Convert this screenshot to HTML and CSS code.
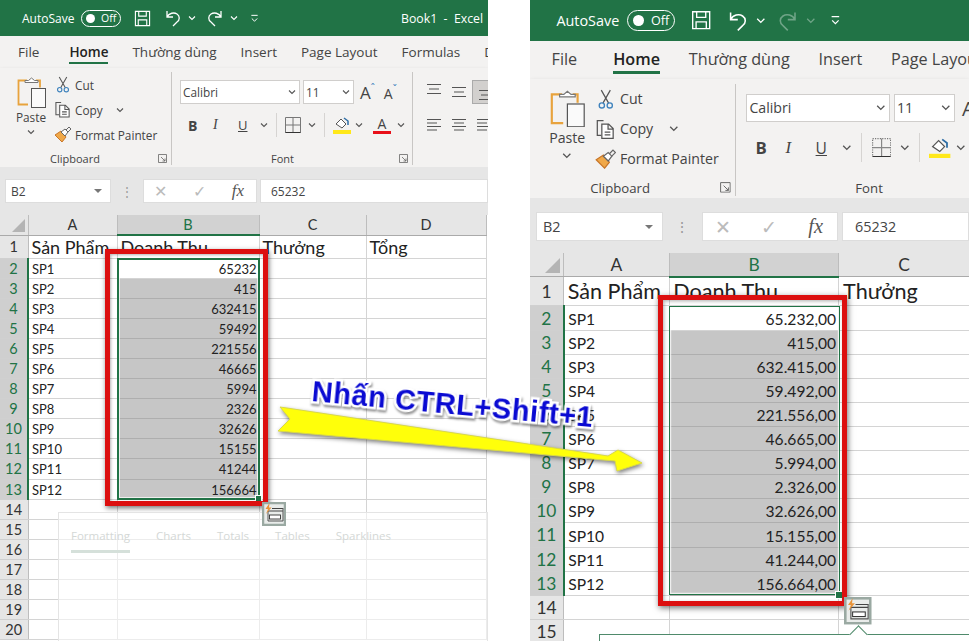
FILE: index.html
```html
<!DOCTYPE html>
<html lang="en">
<head>
    <meta charset="UTF-8">
    <title>Nhấn CTRL+Shift+1</title>
    <link rel="stylesheet" href="styles.css">
</head>
<body>
    <!-- Shared icons -->
    <svg class="icon-defs" width="0" height="0">
        <symbol id="i-save" viewBox="0 0 18 18"><path d="M1.5 1.5h15v15h-15zM5 1.5v5h8v-5M4.5 16.5v-6h9v6" fill="none" stroke="currentColor" stroke-width="1.2"/></symbol>
        <symbol id="i-undo" viewBox="0 0 18 18"><path d="M3 2v6h6M3 8c2-4 7-5 10-3 3 2 3 6 0 8l-4 4" fill="none" stroke="currentColor" stroke-width="1.3"/></symbol>
        <symbol id="i-redo" viewBox="0 0 18 18"><path d="M15 2v6H9M15 8c-2-4-7-5-10-3-3 2-3 6 0 8l4 4" fill="none" stroke="currentColor" stroke-width="1.3"/></symbol>
        <symbol id="i-chev" viewBox="0 0 8 6"><path d="M1 1.5l3 3 3-3" fill="none" stroke="currentColor" stroke-width="1.1"/></symbol>
        <symbol id="i-qat" viewBox="0 0 10 10"><path d="M1.5 1.5h7M2 5l3 3 3-3" fill="none" stroke="currentColor" stroke-width="1.1"/></symbol>
        <symbol id="i-paste" viewBox="0 0 30 32"><path d="M6 4.500h4M19 4.500h4v7M6 4.500H1.500v24H11" fill="none" stroke="#e8a33d" stroke-width="1.800"/><path d="M8 6.500V4.500h3.500l3-2.500 3 2.500H21v2z" fill="#fff" stroke="#777"/><rect x="14.500" y="12.500" width="14" height="19" fill="#fafafa" stroke="#555"/></symbol>
        <symbol id="i-cut" viewBox="0 0 14 18"><path d="M3 1l6.500 11.500M11 1L4.500 12.500" fill="none" stroke="#555" stroke-width="1.100"/><circle cx="3.500" cy="14.500" r="2.300" fill="none" stroke="#3f83bd" stroke-width="1.200"/><circle cx="10.500" cy="14.500" r="2.300" fill="none" stroke="#3f83bd" stroke-width="1.200"/></symbol>
        <symbol id="i-copy" viewBox="0 0 18 18"><path d="M5 14.500H1.500V1.500H7" fill="none" stroke="#555" stroke-width="1.100"/><path d="M5.500 4.500h6l4 4v8.500h-10zM11 4.500v4.500h4.500M8 11.500h5M8 14h5" fill="#fff" stroke="#555" stroke-width="1.100"/></symbol>
        <symbol id="i-painter" viewBox="0 0 18 17"><path d="M1 9l6-4 5 6-4 5z" fill="#f0a848" stroke="#c8762a"/><path d="M7 6l4-3 3 3-3 4z" fill="#fff" stroke="#666"/><path d="M12 4l3-3 2 2-3 3" fill="none" stroke="#666"/></symbol>
        <symbol id="i-launch" viewBox="0 0 9 9"><path d="M.5.500h8v8h-8zM3 3l4 4M7 4.500V7H4.500" fill="none" stroke="#666" stroke-width=".8"/></symbol>
        <symbol id="i-lines-c" viewBox="0 0 16 12"><path d="M1 1.500h14M3 6h10M1 10.500h14" stroke="#555" stroke-width="1.100"/></symbol>
        <symbol id="i-lines-l" viewBox="0 0 16 14"><path d="M1 1.500h14M1 5h10M1 8.500h14M1 12h10" stroke="#555" stroke-width="1.100"/></symbol>
        <symbol id="i-lines-m" viewBox="0 0 16 14"><path d="M1 1.500h14M3 5h10M1 8.500h14M3 12h10" stroke="#555" stroke-width="1.100"/></symbol>
        <symbol id="i-borders" viewBox="0 0 16 16"><path d="M.5.500h15v15H.5zM8 .5v15M.5 8h15" fill="none" stroke="#777"/><path d="M.5 15.500h15" stroke="#333"/></symbol>
        <symbol id="i-borders-dash" viewBox="0 0 16 16"><path d="M.5.500h15v15H.5z" fill="none" stroke="#777" stroke-dasharray="1 1"/><path d="M8 .5v15M.5 8h15" fill="none" stroke="#888"/><path d="M.5 15.500h15" stroke="#333"/></symbol>
        <symbol id="i-fill" viewBox="0 0 18 18"><path d="M3 8l5-5 5 5-4 4z" fill="#fff" stroke="#555"/><path d="M11 2l4 3v4" fill="none" stroke="#2f6ea5" stroke-width="1.500"/><rect y="14" width="18" height="4" fill="#ffe81a"/></symbol>
        <symbol id="i-quick" viewBox="0 0 24 24"><rect x="1" y="1" width="22" height="22" fill="#e9ecea" stroke="#9aa9a2" stroke-width="2.500"/><path d="M10 6.500h11M6 9h15" stroke="#444"/><path d="M6 9v10h15V6" fill="none" stroke="#555"/><rect x="7.500" y="13" width="11" height="4" fill="#fff" stroke="#333" stroke-width=".9"/><path d="M7.500 1L3.500 7h2.500L4 12l5.500-6.500H7z" fill="#e8943a"/></symbol>
    </svg>

    <div class="page">
        <!-- Left window: before -->
        <section class="excel excel-before">
            <header class="titlebar">
                <span class="autosave">AutoSave</span>
                <span class="toggle"><i></i>Off</span>
                <svg class="qa-save"><use href="#i-save"/></svg>
                <svg class="qa-undo"><use href="#i-undo"/></svg>
                <svg class="chev chev-light"><use href="#i-chev"/></svg>
                <svg class="qa-undo"><use href="#i-redo"/></svg>
                <svg class="chev chev-light"><use href="#i-chev"/></svg>
                <svg class="qa-more"><use href="#i-qat"/></svg>
                <span class="doc-title">Book1 &nbsp;-&nbsp; Excel</span>
            </header>
            <nav class="tabs">
                <a class="tab-file">File</a><a class="active">Home</a><a>Thường dùng</a><a>Insert</a><a>Page Layout</a><a>Formulas</a><a>Data</a>
            </nav>
            <div class="ribbon">
                <div class="group group-clip">
                    <div class="group-body clip-body">
                        <div class="paste">
                            <svg class="paste-icon"><use href="#i-paste"/></svg>
                            <span>Paste</span>
                            <svg class="chev"><use href="#i-chev"/></svg>
                        </div>
                        <div class="clip-list">
                            <div class="clip-item"><svg class="clip-icon"><use href="#i-cut"/></svg>Cut</div>
                            <div class="clip-item"><svg class="clip-icon"><use href="#i-copy"/></svg>Copy<svg class="chev chev-copy"><use href="#i-chev"/></svg></div>
                            <div class="clip-item"><svg class="clip-icon"><use href="#i-painter"/></svg>Format Painter</div>
                        </div>
                    </div>
                    <div class="group-label"><span>Clipboard</span><svg class="launch"><use href="#i-launch"/></svg></div>
                </div>
                <div class="group group-font">
                    <div class="group-body">
                        <div class="font-row">
                            <div class="combo combo-font">Calibri<svg class="chev"><use href="#i-chev"/></svg></div>
                            <div class="combo combo-size">11<svg class="chev"><use href="#i-chev"/></svg></div>
                            <span class="grow">A<sup>ˆ</sup></span>
                            <span class="shrink">A<sup>ˇ</sup></span>
                        </div>
                        <div class="font-row style-row">
                            <b class="st">B</b><i class="st st-i">I</i><u class="st st-u">U</u><svg class="chev"><use href="#i-chev"/></svg>
                            <span class="vsep"></span>
                            <svg class="tool"><use href="#i-borders"/></svg><svg class="chev"><use href="#i-chev"/></svg>
                            <span class="vsep"></span>
                            <svg class="tool tool-fill"><use href="#i-fill"/></svg><svg class="chev"><use href="#i-chev"/></svg>
                            <span class="font-color">A</span><svg class="chev"><use href="#i-chev"/></svg>
                        </div>
                    </div>
                    <div class="group-label"><span>Font</span><svg class="launch"><use href="#i-launch"/></svg></div>
                </div>
                <div class="group group-align">
                    <div class="align-row">
                        <svg class="align align-top"><use href="#i-lines-c"/></svg>
                        <svg class="align"><use href="#i-lines-c"/></svg>
                        <span class="align-on"><svg class="align"><use href="#i-lines-c"/></svg></span>
                    </div>
                    <div class="align-row align-row2">
                        <svg class="align"><use href="#i-lines-l"/></svg>
                        <svg class="align"><use href="#i-lines-m"/></svg>
                        <svg class="align"><use href="#i-lines-l"/></svg>
                    </div>
                </div>
            </div>
            <div class="formula">
                <div class="namebox">B2<span class="caret"></span></div>
                <div class="dots">⋮</div>
                <div class="fx-box"><span>✕</span><span>✓</span><em>fx</em></div>
                <div class="fx-input">65232</div>
            </div>
            <div class="sheet">
                <table>
                    <colgroup><col class="w-head"><col class="w-a"><col class="w-b"><col class="w-c"><col class="w-d"></colgroup>
                    <tr class="col-heads"><th class="corner"><span></span></th><th>A</th><th class="on">B</th><th>C</th><th>D</th></tr>
                    <tr class="title-row"><th>1</th><td>Sản Phẩm</td><td>Doanh Thu</td><td>Thưởng</td><td>Tổng</td></tr>
                    <tr><th class="on">2</th><td>SP1</td><td class="num first">65232</td><td></td><td></td></tr>
                    <tr><th class="on">3</th><td>SP2</td><td class="num sel">415</td><td></td><td></td></tr>
                    <tr><th class="on">4</th><td>SP3</td><td class="num sel">632415</td><td></td><td></td></tr>
                    <tr><th class="on">5</th><td>SP4</td><td class="num sel">59492</td><td></td><td></td></tr>
                    <tr><th class="on">6</th><td>SP5</td><td class="num sel">221556</td><td></td><td></td></tr>
                    <tr><th class="on">7</th><td>SP6</td><td class="num sel">46665</td><td></td><td></td></tr>
                    <tr><th class="on">8</th><td>SP7</td><td class="num sel">5994</td><td></td><td></td></tr>
                    <tr><th class="on">9</th><td>SP8</td><td class="num sel">2326</td><td></td><td></td></tr>
                    <tr><th class="on">10</th><td>SP9</td><td class="num sel">32626</td><td></td><td></td></tr>
                    <tr><th class="on">11</th><td>SP10</td><td class="num sel">15155</td><td></td><td></td></tr>
                    <tr><th class="on">12</th><td>SP11</td><td class="num sel">41244</td><td></td><td></td></tr>
                    <tr><th class="on">13</th><td>SP12</td><td class="num sel">156664</td><td></td><td></td></tr>
                    <tr><th>14</th><td></td><td></td><td></td><td></td></tr>
                    <tr><th>15</th><td></td><td></td><td></td><td></td></tr>
                    <tr><th>16</th><td></td><td></td><td></td><td></td></tr>
                    <tr><th>17</th><td></td><td></td><td></td><td></td></tr>
                    <tr><th>18</th><td></td><td></td><td></td><td></td></tr>
                    <tr><th>19</th><td></td><td></td><td></td><td></td></tr>
                    <tr><th>20</th><td></td><td></td><td></td><td></td></tr>
                </table>
                <div class="selection"><span class="handle"></span></div>
                <div class="redbox"></div>
                <div class="ghost-popup">
                    <span class="ghost-on">Formatting</span><span>Charts</span><span>Totals</span><span>Tables</span><span>Sparklines</span>
                </div>
                <svg class="quick"><use href="#i-quick"/></svg>
            </div>
        </section>

        <!-- Right window: after -->
        <section class="excel excel-after">
            <header class="titlebar">
                <span class="autosave">AutoSave</span>
                <span class="toggle"><i></i>Off</span>
                <svg class="qa-save"><use href="#i-save"/></svg>
                <svg class="qa-undo"><use href="#i-undo"/></svg>
                <svg class="chev chev-light"><use href="#i-chev"/></svg>
                <svg class="qa-undo dim"><use href="#i-redo"/></svg>
                <svg class="chev chev-light dim"><use href="#i-chev"/></svg>
                <svg class="qa-more"><use href="#i-qat"/></svg>
            </header>
            <nav class="tabs">
                <a class="tab-file">File</a><a class="active">Home</a><a>Thường dùng</a><a>Insert</a><a>Page Layout</a>
            </nav>
            <div class="ribbon">
                <div class="group group-clip">
                    <div class="group-body clip-body">
                        <div class="paste">
                            <svg class="paste-icon"><use href="#i-paste"/></svg>
                            <span>Paste</span>
                            <svg class="chev"><use href="#i-chev"/></svg>
                        </div>
                        <div class="clip-list">
                            <div class="clip-item"><svg class="clip-icon"><use href="#i-cut"/></svg>Cut</div>
                            <div class="clip-item"><svg class="clip-icon"><use href="#i-copy"/></svg>Copy<svg class="chev chev-copy"><use href="#i-chev"/></svg></div>
                            <div class="clip-item"><svg class="clip-icon"><use href="#i-painter"/></svg>Format Painter</div>
                        </div>
                    </div>
                    <div class="group-label"><span>Clipboard</span><svg class="launch"><use href="#i-launch"/></svg></div>
                </div>
                <div class="group group-font">
                    <div class="group-body">
                        <div class="font-row">
                            <div class="combo combo-font">Calibri<svg class="chev"><use href="#i-chev"/></svg></div>
                            <div class="combo combo-size">11<svg class="chev"><use href="#i-chev"/></svg></div>
                            <span class="grow">A<sup>ˆ</sup></span>
                        </div>
                        <div class="font-row style-row">
                            <b class="st">B</b><i class="st st-i">I</i><u class="st st-u">U</u><svg class="chev"><use href="#i-chev"/></svg>
                            <span class="vsep"></span>
                            <svg class="tool"><use href="#i-borders-dash"/></svg><svg class="chev"><use href="#i-chev"/></svg>
                            <span class="vsep"></span>
                            <svg class="tool tool-fill"><use href="#i-fill"/></svg><svg class="chev"><use href="#i-chev"/></svg>
                        </div>
                    </div>
                    <div class="group-label"><span>Font</span><svg class="launch"><use href="#i-launch"/></svg></div>
                </div>
            </div>
            <div class="formula">
                <div class="namebox">B2<span class="caret"></span></div>
                <div class="dots">⋮</div>
                <div class="fx-box"><span>✕</span><span>✓</span><em>fx</em></div>
                <div class="fx-input">65232</div>
            </div>
            <div class="sheet">
                <table>
                    <colgroup><col class="w-head"><col class="w-a"><col class="w-b"><col class="w-c"></colgroup>
                    <tr class="col-heads"><th class="corner"><span></span></th><th>A</th><th class="on">B</th><th>C</th></tr>
                    <tr class="title-row"><th>1</th><td>Sản Phẩm</td><td>Doanh Thu</td><td>Thưởng</td></tr>
                    <tr><th class="on">2</th><td>SP1</td><td class="num first">65.232,00</td><td></td></tr>
                    <tr><th class="on">3</th><td>SP2</td><td class="num sel">415,00</td><td></td></tr>
                    <tr><th class="on">4</th><td>SP3</td><td class="num sel">632.415,00</td><td></td></tr>
                    <tr><th class="on">5</th><td>SP4</td><td class="num sel">59.492,00</td><td></td></tr>
                    <tr><th class="on">6</th><td>SP5</td><td class="num sel">221.556,00</td><td></td></tr>
                    <tr><th class="on">7</th><td>SP6</td><td class="num sel">46.665,00</td><td></td></tr>
                    <tr><th class="on">8</th><td>SP7</td><td class="num sel">5.994,00</td><td></td></tr>
                    <tr><th class="on">9</th><td>SP8</td><td class="num sel">2.326,00</td><td></td></tr>
                    <tr><th class="on">10</th><td>SP9</td><td class="num sel">32.626,00</td><td></td></tr>
                    <tr><th class="on">11</th><td>SP10</td><td class="num sel">15.155,00</td><td></td></tr>
                    <tr><th class="on">12</th><td>SP11</td><td class="num sel">41.244,00</td><td></td></tr>
                    <tr><th class="on">13</th><td>SP12</td><td class="num sel">156.664,00</td><td></td></tr>
                    <tr><th>14</th><td></td><td></td><td></td></tr>
                    <tr><th>15</th><td></td><td></td><td></td></tr>
                </table>
                <div class="selection"><span class="handle"></span></div>
                <div class="redbox"></div>
                <div class="popup-edge"></div>
                <svg class="quick"><use href="#i-quick"/></svg>
            </div>
        </section>

        <!-- Arrow and caption lie over both windows -->
        <svg class="arrow" width="972" height="641">
            <polygon class="arrow-shape" points="280,407 608,456 618,450 642,463 617,471 615,461 278,431 290,419"/>
        </svg>
        <div class="caption">Nhấn CTRL+Shift+1</div>
    </div>
</body>
</html>
```
FILE: styles.css
```css
/* Basic styling */
* {
    box-sizing: border-box;
}

body {
    margin: 0;
    background-color: #fff;
    font-family: "Open Sans", "Noto Sans", sans-serif;
    color: #444;
}

.icon-defs {
    position: absolute;
}

.page {
    position: relative;
    display: flex;
    gap: 42px;
    height: 641px;
    overflow: hidden;
}

/* Each window is drawn at the left window's size, the right one is zoomed */
.excel {
    flex: none;
    overflow: hidden;
    height: 641px;
}

.excel-before {
    width: 488px;
    --title-h: 36px;
    --row1-h: 23px;
    --sheet-gap: 12px;
}

.excel-after {
    width: 366px;
    zoom: 1.2;
    height: 534px;
    --title-h: 34px;
    --row1-h: 24.2px;
    --sheet-gap: 9.8px;
}

/* Title bar */
.titlebar {
    display: flex;
    align-items: center;
    height: var(--title-h);
    padding-left: 22px;
    background-color: #217346;
    color: #fff;
    font-size: 12px;
}

.autosave {
    width: 59px;
}

.toggle {
    display: flex;
    align-items: center;
    width: 40px;
    height: 17px;
    padding-left: 4px;
    border: 1px solid #fff;
    border-radius: 9px;
    font-size: 10.5px;
}

.toggle i {
    width: 9px;
    height: 9px;
    margin-right: 6px;
    border-radius: 50%;
    background-color: #fff;
}

.qa-save {
    width: 17px;
    height: 17px;
    margin: 0 13px;
}

.qa-undo {
    width: 18px;
    height: 18px;
    margin-right: 6px;
}

.qa-more {
    width: 9px;
    height: 9px;
    margin-left: 2px;
}

.dim {
    opacity: 0.35;
}

.chev {
    flex: none;
    width: 8px;
    height: 6px;
    color: #555;
}

.chev-light {
    margin-right: 10px;
    color: #fff;
}

.doc-title {
    margin-left: 142px;
    font-size: 12.3px;
    white-space: nowrap;
}

/* Tabs */
.tabs {
    display: flex;
    gap: 24px;
    height: 32px;
    padding: 7px 0 0 18px;
    background-color: #f3f2f1;
    font-size: 13.5px;
    white-space: nowrap;
}

.tabs a {
    height: 21px;
    line-height: 18px;
}

.tabs .tab-file {
    margin-right: 6px;
}

.tabs .active {
    border-bottom: 2.5px solid #217346;
    color: #222;
    font-weight: 600;
}

/* Ribbon */
.ribbon {
    display: flex;
    height: 99px;
    padding-top: 4px;
    background-color: #f3f2f1;
    box-shadow: 0 2px 4px rgba(0, 0, 0, 0.18);
    font-size: 11.8px;
}

.group {
    display: flex;
    flex: none;
    flex-direction: column;
    height: 93px;
    border-right: 1px solid #c8c6c4;
}

.group-body {
    height: 80px;
}

.group-label {
    display: flex;
    align-items: center;
    justify-content: center;
    height: 13px;
    font-size: 11px;
}

.group-label span {
    flex: 1;
    text-align: center;
}

.group-clip .group-label span {
    padding-right: 8px;
}

.group-font .group-label span {
    padding-right: 14px;
}

.launch {
    width: 9px;
    height: 9px;
    margin-right: 4px;
}

.group-clip {
    width: 172px;
}

.clip-body {
    display: flex;
    padding-left: 13px;
}

.paste {
    display: flex;
    flex-direction: column;
    align-items: center;
    width: 36px;
    padding-top: 4px;
}

.paste-icon {
    width: 30px;
    height: 32px;
    margin: 0 0 1px 2px;
}

.paste .chev {
    margin-top: 4px;
}

.clip-list {
    margin-left: 5px;
}

.clip-item {
    display: flex;
    align-items: center;
    height: 25px;
    white-space: nowrap;
}

.clip-icon {
    width: 18px;
    height: 17px;
    margin-right: 3px;
}

.chev-copy {
    margin-left: 13px;
}

.group-font {
    width: 241px;
    padding-left: 8px;
}

.font-row {
    display: flex;
    align-items: center;
    height: 24px;
    margin-top: 8px;
}

.combo {
    display: flex;
    align-items: center;
    justify-content: space-between;
    height: 24px;
    margin-right: 3px;
    padding: 0 3px 0 2px;
    border: 1px solid #d0cecc;
    background-color: #fff;
}

.combo-font {
    width: 120px;
}

.combo-size {
    width: 51px;
}

.grow,
.shrink {
    margin-left: 3px;
    font-size: 17px;
}

.shrink {
    margin-left: 9px;
    font-size: 14px;
}

.grow sup,
.shrink sup {
    color: #3f83bd;
    font-size: 10px;
}

.style-row {
    margin-top: 9px;
    padding-left: 8px;
}

.st {
    width: 25px;
    font-family: "Liberation Serif", serif;
    font-size: 14px;
}

b.st {
    font-family: "Open Sans", sans-serif;
}

.st-u {
    width: 14px;
    margin-right: 8px;
    font-family: "Open Sans", sans-serif;
    font-size: 13px;
}

.vsep {
    width: 1px;
    height: 24px;
    margin: 0 8px;
    background-color: #d6d4d2;
}

.tool {
    width: 16px;
    height: 16px;
    margin-right: 7px;
}

.tool-fill {
    width: 18px;
    height: 18px;
    margin-right: 4px;
}

.font-color {
    width: 18px;
    margin: 0 6px 0 10px;
    border-bottom: 3px solid #e8101a;
    font-size: 14px;
    line-height: 15px;
    text-align: center;
}

.group-align {
    flex: 1;
    border: 0;
    padding-left: 13px;
}

.align-row {
    display: flex;
    align-items: center;
    gap: 9px;
    height: 24px;
    margin-top: 8px;
}

.align-row2 {
    margin-top: 9px;
}

.align {
    flex: none;
    width: 16px;
    height: 14px;
}

.align-top {
    margin-bottom: 6px;
}

.align-on {
    display: flex;
    align-items: flex-end;
    height: 24px;
    margin-left: -4px;
    padding: 0 0 1px 5px;
    border: 1px solid #aaa;
    background-color: #d2d0ce;
}

/* Formula bar */
.formula {
    display: flex;
    align-items: center;
    padding: 12px 0 var(--sheet-gap) 5px;
    background-color: #e6e6e6;
    font-size: 12px;
}

.namebox,
.fx-box,
.fx-input {
    display: flex;
    align-items: center;
    height: 24px;
    background-color: #fff;
    border: 1px solid #ddd;
}

.namebox {
    justify-content: space-between;
    width: 106px;
    padding: 0 8px 0 5px;
}

.caret {
    border: 4px solid transparent;
    border-top-color: #777;
    border-bottom: 0;
}

.dots {
    width: 32px;
    color: #999;
    text-align: center;
}

.fx-box {
    justify-content: space-between;
    width: 114px;
    margin-right: 3px;
    padding: 0 12px 0 10px;
    color: #bbb;
    font-size: 16px;
}

.fx-box em {
    color: #555;
    font-family: "Liberation Serif", serif;
    font-size: 17px;
}

.fx-input {
    flex: 1;
    padding-left: 10px;
}

/* Worksheet */
.sheet {
    position: relative;
    height: 430px;
    background-color: #fff;
}

.excel-after .sheet {
    height: 320px;
}

table {
    width: 486px;
    border-collapse: collapse;
    table-layout: fixed;
    font-family: Lato, "Noto Sans", sans-serif;
    font-size: 13px;
    color: #222;
}

.excel-after table {
    width: 366px;
}

.w-head { width: 28px; }
.w-a { width: 89px; }
.w-b { width: 142px; }
.w-c { width: 107px; }
.w-d { width: 120px; }

.excel-after .w-head { width: 28px; }
.excel-after .w-a { width: 88px; }
.excel-after .w-b { width: 141.5px; }
.excel-after .w-c { width: 108.5px; }

tr {
    height: 20.1px;
}

th {
    padding: 0;
    border-right: 1px solid #bdbdbd;
    border-bottom: 1px solid #d0d0d0;
    background-color: #e6e6e6;
    color: #333;
    font-size: 14.5px;
    font-weight: 400;
}

td {
    overflow: hidden;
    padding: 1px 3px 0;
    border-right: 1px solid #d4d4d4;
    border-bottom: 1px solid #d4d4d4;
    white-space: nowrap;
}

.col-heads {
    height: 20px;
}

.col-heads th {
    border-bottom: 1px solid #aaa;
}

.col-heads .on {
    border-bottom: 2px solid #217346;
}

th.on {
    background-color: #d2d2d2;
    color: #217346;
}

tr > th.on:first-child {
    border-right: 2px solid #217346;
    background-color: #cfcfcf;
}

.corner {
    position: relative;
}

.corner span {
    position: absolute;
    right: 3px;
    bottom: 3px;
    border-width: 0 0 13px 13px;
    border-style: solid;
    border-color: transparent transparent #b4b4b4;
}

.title-row {
    height: var(--row1-h);
}

.title-row td {
    padding-top: 0;
    font-size: 18px;
    line-height: 18px;
    overflow: visible;
}

.title-row th {
    background-color: #e6e6e6;
}

td.num {
    padding-right: 2px;
    text-align: right;
}

.sel {
    background-color: #c6c6c6;
    border-bottom-color: #aeaeae;
}

/* Things lying over the cells */
.selection {
    position: absolute;
    top: 43px;
    left: 117px;
    width: 143px;
    height: 242px;
    border: 2px solid #217346;
    box-shadow: inset 0 0 0 1px rgba(255, 255, 255, 0.7);
}

.excel-after .selection {
    top: 44px;
    left: 116px;
    width: 142px;
    height: 241px;
    border-width: 1.5px;
}

.handle {
    position: absolute;
    right: -3px;
    bottom: -3px;
    width: 5px;
    height: 5px;
    background-color: #217346;
    outline: 1px solid #fff;
}

.redbox {
    position: absolute;
    top: 34px;
    left: 105px;
    width: 163px;
    height: 257px;
    border: 5px solid #dc0f0f;
    box-shadow: 1px 2px 5px rgba(0, 0, 0, 0.55), inset 1px 1px 3px rgba(0, 0, 0, 0.3);
}

.excel-after .redbox {
    top: 35px;
    left: 107px;
    width: 157px;
    height: 259px;
    border-width: 4.5px;
}

.quick {
    position: absolute;
    top: 287px;
    left: 262px;
    width: 24px;
    height: 24px;
}

.excel-after .quick {
    width: 23px;
    height: 23px;
}

.ghost-popup {
    position: absolute;
    top: 297px;
    left: 58px;
    display: flex;
    gap: 26px;
    width: 430px;
    height: 133px;
    padding: 14px 0 0 12px;
    border: 1px solid #e4e4e4;
    background-color: rgba(255, 255, 255, 0.55);
    color: #d4d8d6;
    font-size: 11.5px;
    line-height: 18px;
}

.ghost-popup span {
    height: 26px;
}

.ghost-on {
    border-bottom: 3px solid #d5e0da;
}

.popup-edge {
    position: absolute;
    top: 317.5px;
    left: 57.5px;
    width: 310px;
    height: 10px;
    border: 1px solid #4f8a6b;
    background-color: #fff;
}

.popup-edge::before {
    content: "";
    position: absolute;
    top: -6px;
    left: 210px;
    width: 10px;
    height: 10px;
    border-top: 1px solid #4f8a6b;
    border-left: 1px solid #4f8a6b;
    background-color: #fff;
    transform: rotate(45deg);
}

.arrow {
    position: absolute;
    top: 0;
    left: 0;
}

.arrow-shape {
    fill: #ffff0a;
    stroke: #d8d84a;
    stroke-width: 1;
    filter: drop-shadow(1px 2px 2px rgba(0, 0, 0, 0.5));
}

.caption {
    position: absolute;
    top: 375px;
    left: 312px;
    color: #0a0ad2;
    font-family: "Liberation Sans", Arial, sans-serif;
    font-size: 29px;
    font-weight: 700;
    letter-spacing: 0.6px;
    white-space: nowrap;
    transform: rotate(5.3deg);
    transform-origin: left center;
    paint-order: stroke fill;
    -webkit-text-stroke: 5px #fff;
    filter: drop-shadow(1px 2px 1px rgba(0, 0, 0, 0.45));
}
```
